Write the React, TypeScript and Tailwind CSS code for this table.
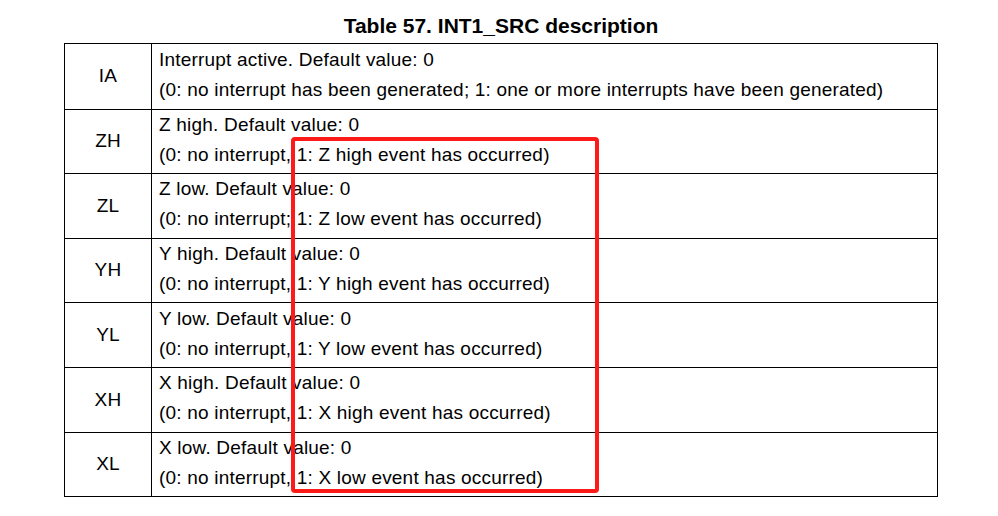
import React from "react";

const rows = [
  {
    name: "IA",
    title: "Interrupt active. Default value: 0",
    detail: "(0: no interrupt has been generated; 1: one or more interrupts have been generated)",
  },
  { name: "ZH", title: "Z high. Default value: 0", detail: "(0: no interrupt, 1: Z high event has occurred)" },
  { name: "ZL", title: "Z low. Default value: 0", detail: "(0: no interrupt; 1: Z low event has occurred)" },
  { name: "YH", title: "Y high. Default value: 0", detail: "(0: no interrupt, 1: Y high event has occurred)" },
  { name: "YL", title: "Y low. Default value: 0", detail: "(0: no interrupt, 1: Y low event has occurred)" },
  { name: "XH", title: "X high. Default value: 0", detail: "(0: no interrupt, 1: X high event has occurred)" },
  { name: "XL", title: "X low. Default value: 0", detail: "(0: no interrupt, 1: X low event has occurred)" },
];

export default function App() {
  return (
    <div
      className="relative w-[998px] h-[516px] bg-white text-black overflow-hidden"
      style={{ fontFamily: '"Liberation Sans", Arial, sans-serif' }}
    >
      <div className="ml-[64px] w-[874px]">
        <div className="h-[43px] flex items-center justify-center pt-[8px] text-[21px] font-bold">
          Table 57. INT1_SRC description
        </div>
        <div className="border border-black">
          {rows.map((row, i) => (
            <div
              key={row.name}
              className={`flex h-[64.6px] ${i > 0 ? "border-t border-black" : ""}`}
            >
              <div className="w-[87px] shrink-0 border-r border-black flex items-center justify-center text-[19px] tracking-[0.2px]">
                {row.name}
              </div>
              <div className="flex flex-col justify-center pl-[7px] text-[19px] tracking-[0.2px] leading-[30px] pb-[3px]">
                <span>{row.title}</span>
                <span>{row.detail}</span>
              </div>
            </div>
          ))}
        </div>
      </div>

      {/* highlight */}
      <div className="absolute left-[291px] top-[137px] w-[308px] h-[356px] border-4 border-[#ff1a1a] rounded-[4px]" />
    </div>
  );
}
